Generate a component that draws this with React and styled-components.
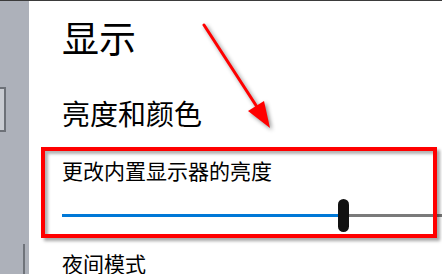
import React from 'react';
import styled, { createGlobalStyle } from 'styled-components';

const GlobalStyle = createGlobalStyle`
  html, body {
    margin: 0;
    padding: 0;
    background: #ffffff;
    overflow: hidden;
  }
  body {
    font-family: "Noto Sans CJK SC", "Noto Sans", sans-serif;
    color: #000000;
  }
`;

const Page = styled.div`
  position: relative;
  width: 442px;
  height: 274px;
  overflow: hidden;
  display: flex;
  flex-direction: column;
`;

const TopRule = styled.div`
  height: 1px;
  background: #3b3b3b;
  flex: none;
`;

const Body = styled.div`
  flex: 1;
  display: flex;
  min-height: 0;
`;

const Sidebar = styled.div`
  width: 29px;
  flex: none;
  background: #adb1ba;
  display: flex;
  flex-direction: column;
`;

const SideTab = styled.div`
  width: 4px;
  height: 41px;
  margin-top: 86px;
  background: #c9ccd2;
  border: 2px solid #6d7178;
  border-left: none;
`;

const SideRule = styled.div`
  width: 2px;
  margin-left: 23px;
  margin-top: 112px;
  flex: 1;
  background: #6f737a;
`;

const Main = styled.div`
  flex: 1;
  padding-left: 33px;
  display: flex;
  flex-direction: column;
`;

const Title = styled.h1`
  margin: 14px 0 0;
  font-size: 37px;
  font-weight: 400;
  line-height: 44px;
`;

const Section = styled.h2`
  margin: 38px 0 0;
  font-size: 28px;
  font-weight: 400;
  line-height: 33px;
`;

const Label = styled.div`
  margin-top: ${(p) => p.$gap}px;
  font-size: 21px;
  line-height: 25px;
`;

const Setting = styled.div`
  position: relative;
  display: flex;
  flex-direction: column;
`;

const Slider = styled.div`
  margin-top: 16px;
  height: 33px;
  display: flex;
  align-items: center;
`;

const Track = styled.div`
  height: 3px;
  background: ${(p) => (p.$filled ? '#0078d7' : '#7a7a7a')};
  flex: ${(p) => (p.$filled ? 'none' : '1')};
`;

const Thumb = styled.div`
  width: 11px;
  height: 33px;
  border-radius: 6px;
  background: #111111;
  flex: none;
`;

const Highlight = styled.div`
  position: absolute;
  left: -21px;
  top: 17px;
  width: 396px;
  height: 91px;
  box-sizing: border-box;
  border: 4px solid #ff0000;
  box-shadow: 3px 3px 3px rgba(0, 0, 0, 0.35), inset 3px 3px 3px rgba(0, 0, 0, 0.3);
  pointer-events: none;
`;

const Arrow = styled.svg`
  position: absolute;
  left: 0;
  top: 0;
  pointer-events: none;
  filter: drop-shadow(2px 2px 2px rgba(0, 0, 0, 0.45));
`;

const App = () => {
  const level = 276;

  return (
    <>
      <GlobalStyle />
      <Page>
        <TopRule />
        <Body>
          <Sidebar>
            <SideTab />
            <SideRule />
          </Sidebar>
          <Main>
            <Title>显示</Title>
            <Section>亮度和颜色</Section>
            <Setting>
              <Label $gap={28}>更改内置显示器的亮度</Label>
              <Slider>
                <Track $filled style={{ width: level }} />
                <Thumb />
                <Track />
              </Slider>
              <Highlight />
            </Setting>
            <Label $gap={19}>夜间模式</Label>
          </Main>
        </Body>
        <Arrow width="442" height="274" viewBox="0 0 442 274">
          <line x1="204" y1="25" x2="259" y2="110" stroke="#ff0000" strokeWidth="3" strokeLinecap="round" />
          <polygon points="270,128 248,111 264,101" fill="#ff0000" />
        </Arrow>
      </Page>
    </>
  );
};

export default App;
